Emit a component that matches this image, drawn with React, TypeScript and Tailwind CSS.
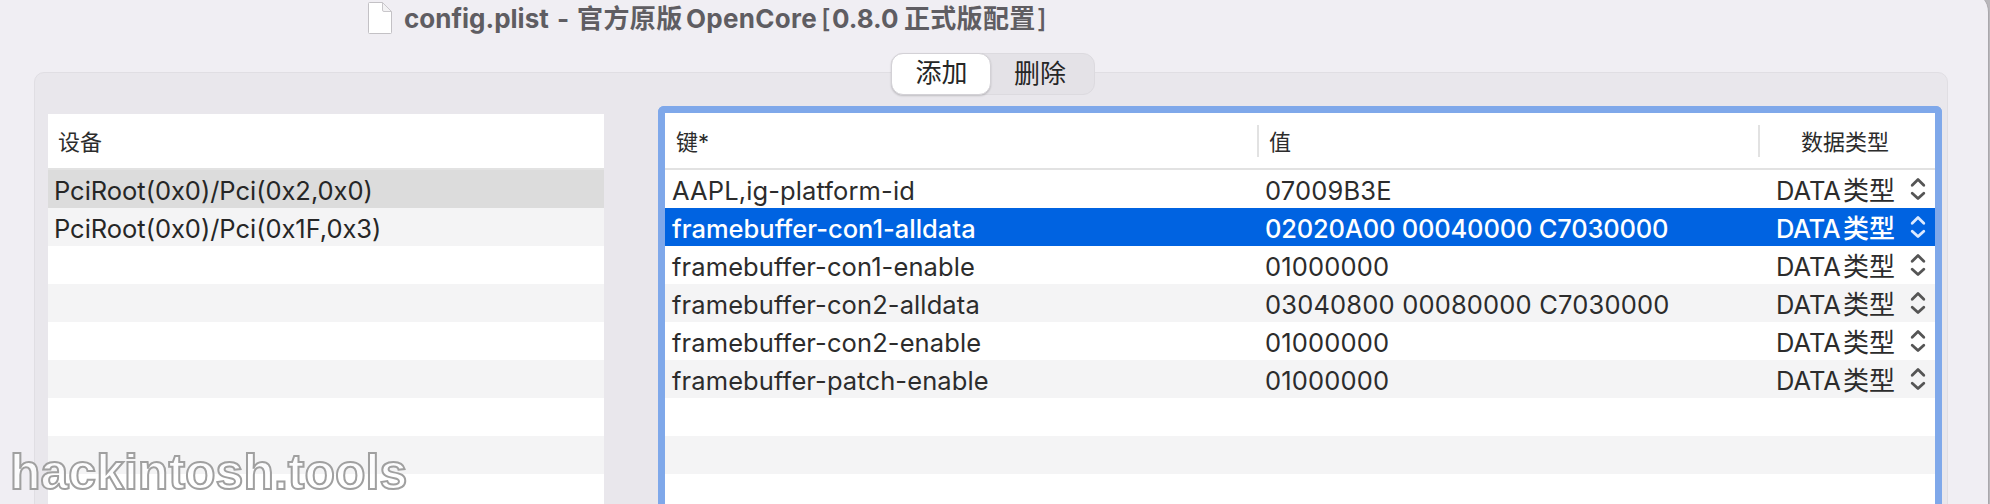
const font = "font-['Inter','Noto_Sans_CJK_SC',sans-serif]";

const devices = ["PciRoot(0x0)/Pci(0x2,0x0)", "PciRoot(0x0)/Pci(0x1F,0x3)", "", "", "", "", "", "", ""];

const entries = [
  { key: "AAPL,ig-platform-id", value: "07009B3E" },
  { key: "framebuffer-con1-alldata", value: "02020A00 00040000 C7030000" },
  { key: "framebuffer-con1-enable", value: "01000000" },
  { key: "framebuffer-con2-alldata", value: "03040800 00080000 C7030000" },
  { key: "framebuffer-con2-enable", value: "01000000" },
  { key: "framebuffer-patch-enable", value: "01000000" },
  null,
  null,
  null,
];

function FileIcon() {
  return (
    <svg width="26" height="34" viewBox="0 0 26 34" className="shrink-0">
      <path d="M2.5 1.5H15.5L24.5 10.5V31.5Q24.5 32.5 23.5 32.5H2.5Q1.5 32.5 1.5 31.5V2.5Q1.5 1.5 2.5 1.5Z" fill="#fff" stroke="#c3c1c5" />
      <path d="M15.5 1.5V9Q15.5 10.5 17 10.5H24.5Z" fill="#f3f2f4" stroke="#c9c7cb" />
    </svg>
  );
}

function Stepper({ selected }: { selected: boolean }) {
  return (
    <svg
      width="16"
      height="24"
      viewBox="0 0 16 24"
      fill="none"
      strokeWidth="2.8"
      strokeLinecap="round"
      strokeLinejoin="round"
      className={selected ? "stroke-[#dceaff]" : "stroke-[#555555]"}
    >
      <path d="M2.2 8.2L8 2.6L13.8 8.2M2.2 16.2L8 21.6L13.8 16.2" />
    </svg>
  );
}

function TitleBar() {
  return (
    <header className="flex h-[53px] shrink-0 items-start pl-[367px] pt-px">
      <FileIcon />
      <h1 className="ml-[11px] flex h-9 items-center whitespace-pre text-[26px] font-bold leading-9 text-[#5f5d62]">
        <span className="w-[153px]">config.plist</span>
        <span className="w-[20px]">-</span>
        <span className="w-[109px] tracking-[0.4px]">官方原版</span>
        <span className="w-[135px] tracking-[0.3px]">OpenCore</span>
        <span className="w-[11px] font-medium">[</span>
        <span className="w-[72px]">0.8.0</span>
        <span className="w-[133px] tracking-[0.3px]">正式版配置</span>
        <span className="font-medium">]</span>
      </h1>
    </header>
  );
}

function Tabs() {
  return (
    <div className="relative z-10 mx-auto flex h-[42px] w-[204px] -translate-x-[1px] shrink-0 rounded-[12px] border border-[#dcdadf] bg-[#e4e2e7] text-[26px] leading-[38px] text-[#262626]">
      <button className="-my-px -ml-px h-[42px] w-[100px] rounded-[12px] border border-[#d3d1d6] bg-white pb-0.5 pl-px shadow-[0_1px_2px_rgba(0,0,0,0.18)]">添加</button>
      <button className="flex-1 pr-[5px]">删除</button>
    </div>
  );
}

function DeviceTable() {
  return (
    <section className="h-[390px] w-[556px] shrink-0 bg-white">
      <div className="h-[54px] pl-[10px] text-[22px] leading-[57px] text-[#2c2c2c]">设备</div>
      <div className="h-0.5 bg-[#e2e2e2]" />
      {devices.map((name, i) => (
        <div
          key={i}
          className={`h-[38px] whitespace-pre pl-[6px] text-[25.5px] leading-[42px] tracking-[-0.03px] text-[#262626] ${
            i === 0 ? "bg-[#dcdcdc]" : i % 2 ? "bg-[#f4f4f5]" : "bg-white"
          }`}
        >
          {name}
        </div>
      ))}
    </section>
  );
}

function PropertyTable() {
  return (
    <section className="-mt-2 ml-[54px] h-[398px] w-[1284px] shrink-0 overflow-hidden rounded-t-[6px] border-x-[7px] border-t-[7px] border-[#7fa8ea] bg-white">
      <div className="flex h-[55px] items-center text-[22px] text-[#2c2c2c]">
        <div className="w-[592px] pl-[11px] pt-[3px]">键*</div>
        <div className="h-8 w-0.5 bg-[#e2e2e2]" />
        <div className="w-[499px] pl-[10px] pt-[3px]">值</div>
        <div className="h-8 w-0.5 bg-[#e2e2e2]" />
        <div className="flex-1 pr-[5px] pt-[3px] text-center">数据类型</div>
      </div>
      <div className="h-0.5 bg-[#e2e2e2]" />
      {entries.map((entry, i) => (
        <div
          key={i}
          className={`flex h-[38px] whitespace-pre text-[25.5px] leading-[42px] ${
            i === 1 ? "bg-[#0063e1] font-medium text-white" : i % 2 ? "bg-[#f4f4f5] text-[#2c2c2c]" : "bg-white text-[#2c2c2c]"
          }`}
        >
          {entry && (
            <>
              <div className={`w-[600px] pl-[7px] ${i === 1 ? "tracking-[0px]" : "tracking-[0.11px]"}`}>{entry.key}</div>
              <div className={`w-[511px] ${i === 1 ? "tracking-[-0.2px]" : "tracking-[0.17px]"}`}>{entry.value}</div>
              <div className="flex w-[134px]">
                <span className={`w-[67px] ${i === 1 ? "tracking-[-0.4px]" : ""}`}>DATA</span>
                <span className="text-[26px]">类型</span>
              </div>
              <div className="pt-[7px]">
                <Stepper selected={i === 1} />
              </div>
            </>
          )}
        </div>
      ))}
    </section>
  );
}

export default function App() {
  return (
    <div className={`${font} relative h-[504px] w-[1990px] overflow-hidden bg-[#b9b7bb]`}>
      <div className="-mt-2 flex h-[524px] w-[1989px] flex-col rounded-tr-[20px] border-r border-[#a9a7ab] bg-[#f0eef3] pt-2">
        <TitleBar />
        <Tabs />
        <main className="-mt-[23px] ml-[34px] flex h-[460px] w-[1914px] rounded-t-[10px] border border-[#e0dee3] bg-[#e9e7ec] pl-[13px] pt-[41px]">
          <DeviceTable />
          <PropertyTable />
        </main>
      </div>
      <div className="absolute left-[10px] top-[444px] z-20 font-['Liberation_Sans',sans-serif] text-[50px] font-bold leading-[56px] text-white/75 [-webkit-text-stroke:2px_#a0a0a0]">
        hackintosh.tools
      </div>
    </div>
  );
}
